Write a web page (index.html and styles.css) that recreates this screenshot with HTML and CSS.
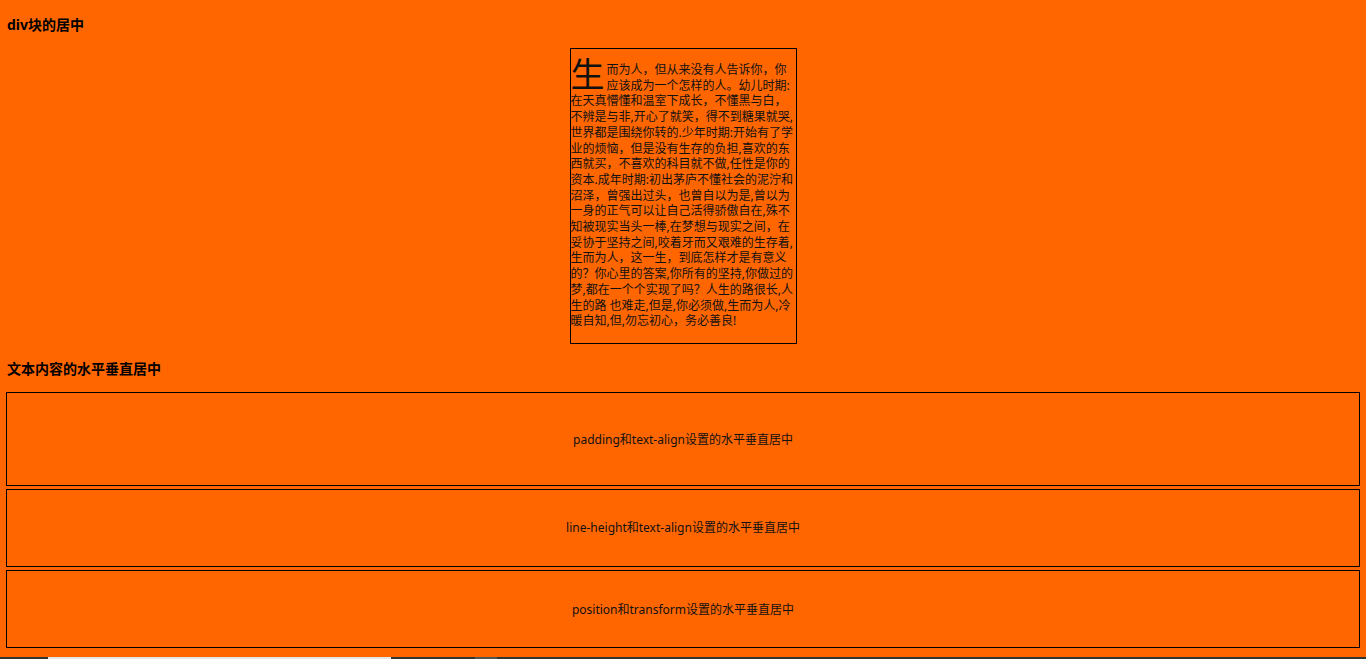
FILE: index.html
```html
<!DOCTYPE html>
<html lang="zh-CN">
<head>
<meta charset="utf-8">
<title>居中</title>
<link rel="stylesheet" href="styles.css">
</head>
<body>
<div class="page">
  <h5 class="title title-first">div块的居中</h5>
  <div class="essay">
    <p><span class="dropcap">生</span>而为人，但从来没有人告诉你，你应该成为一个怎样的人。幼儿时期:在天真懵懂和温室下成长，不懂黑与白，不辨是与非,开心了就笑，得不到糖果就哭,世界都是围绕你转的.少年时期:开始有了学业的烦恼，但是没有生存的负担,喜欢的东西就买，不喜欢的科目就不做,任性是你的资本.成年时期:初出茅庐不懂社会的泥泞和沼泽，曾强出过头，也曾自以为是,曾以为一身的正气可以让自己活得骄傲自在,殊不知被现实当头一棒,在梦想与现实之间，在妥协于坚持之间,咬着牙而又艰难的生存着,生而为人，这一生，到底怎样才是有意义的？你心里的答案,你所有的坚持,你做过的梦,都在一个个实现了吗？人生的路很长,人生的路 也难走,但是,你必须做,生而为人,冷暖自知,但,勿忘初心，务必善良!</p>
  </div>
  <h5 class="title title-second">文本内容的水平垂直居中</h5>
  <div class="box box-padding">padding和text-align设置的水平垂直居中</div>
  <div class="box box-line">line-height和text-align设置的水平垂直居中</div>
  <div class="box box-transform"><span class="box-inner">position和transform设置的水平垂直居中</span></div>
</div>
<div class="strip">
  <div class="strip-dark strip-a"></div>
  <div class="strip-light"></div>
  <div class="strip-dark strip-b"></div>
  <div class="strip-mid"></div>
  <div class="strip-dark strip-c"></div>
</div>
</body>
</html>
```

FILE: styles.css
```css
html, body {
  margin: 0;
  padding: 0;
  background: #ff6600;
}

body {
  font-family: "Noto Sans", "Noto Sans CJK SC", sans-serif;
  font-size: 12px;
  color: #111;
}

.page {
  padding: 0 6px;
}

.title {
  margin: 0;
  font-size: 14px;
  font-weight: bold;
  line-height: 19px;
  color: #000;
  padding-left: 1px;
}

.title-first {
  padding-top: 15px;
  padding-bottom: 14px;
}

.title-second {
  padding-top: 15px;
  padding-bottom: 14px;
}

.essay {
  width: 225px;
  margin: 0 auto;
  border: 1px solid #000;
}

.essay p {
  margin: 13px 0 14px;
  font-size: 12px;
  line-height: 15.7px;
  text-align: left;
}

.dropcap {
  float: left;
  font-size: 34px;
  line-height: 28px;
  height: 29px;
  margin: -2px 2px 0 0;
}

.box {
  border: 1px solid #000;
  text-align: center;
  font-size: 12px;
}

.box-padding {
  padding: 39px 0 37px;
  line-height: 16px;
  margin-bottom: 3px;
}

.box-line {
  height: 76px;
  line-height: 76px;
  margin-bottom: 3px;
}

.box-transform {
  height: 76px;
  display: flex;
  align-items: center;
  justify-content: center;
}

.strip {
  margin-top: 9px;
  display: flex;
  height: 20px;
}

.strip-dark {
  background: #33332f;
}

.strip-a {
  width: 48px;
}

.strip-light {
  width: 343px;
  background: #e6e6e6;
}

.strip-b {
  width: 84px;
}

.strip-mid {
  width: 22px;
  background: #55554f;
}

.strip-c {
  flex: 1;
}
```
